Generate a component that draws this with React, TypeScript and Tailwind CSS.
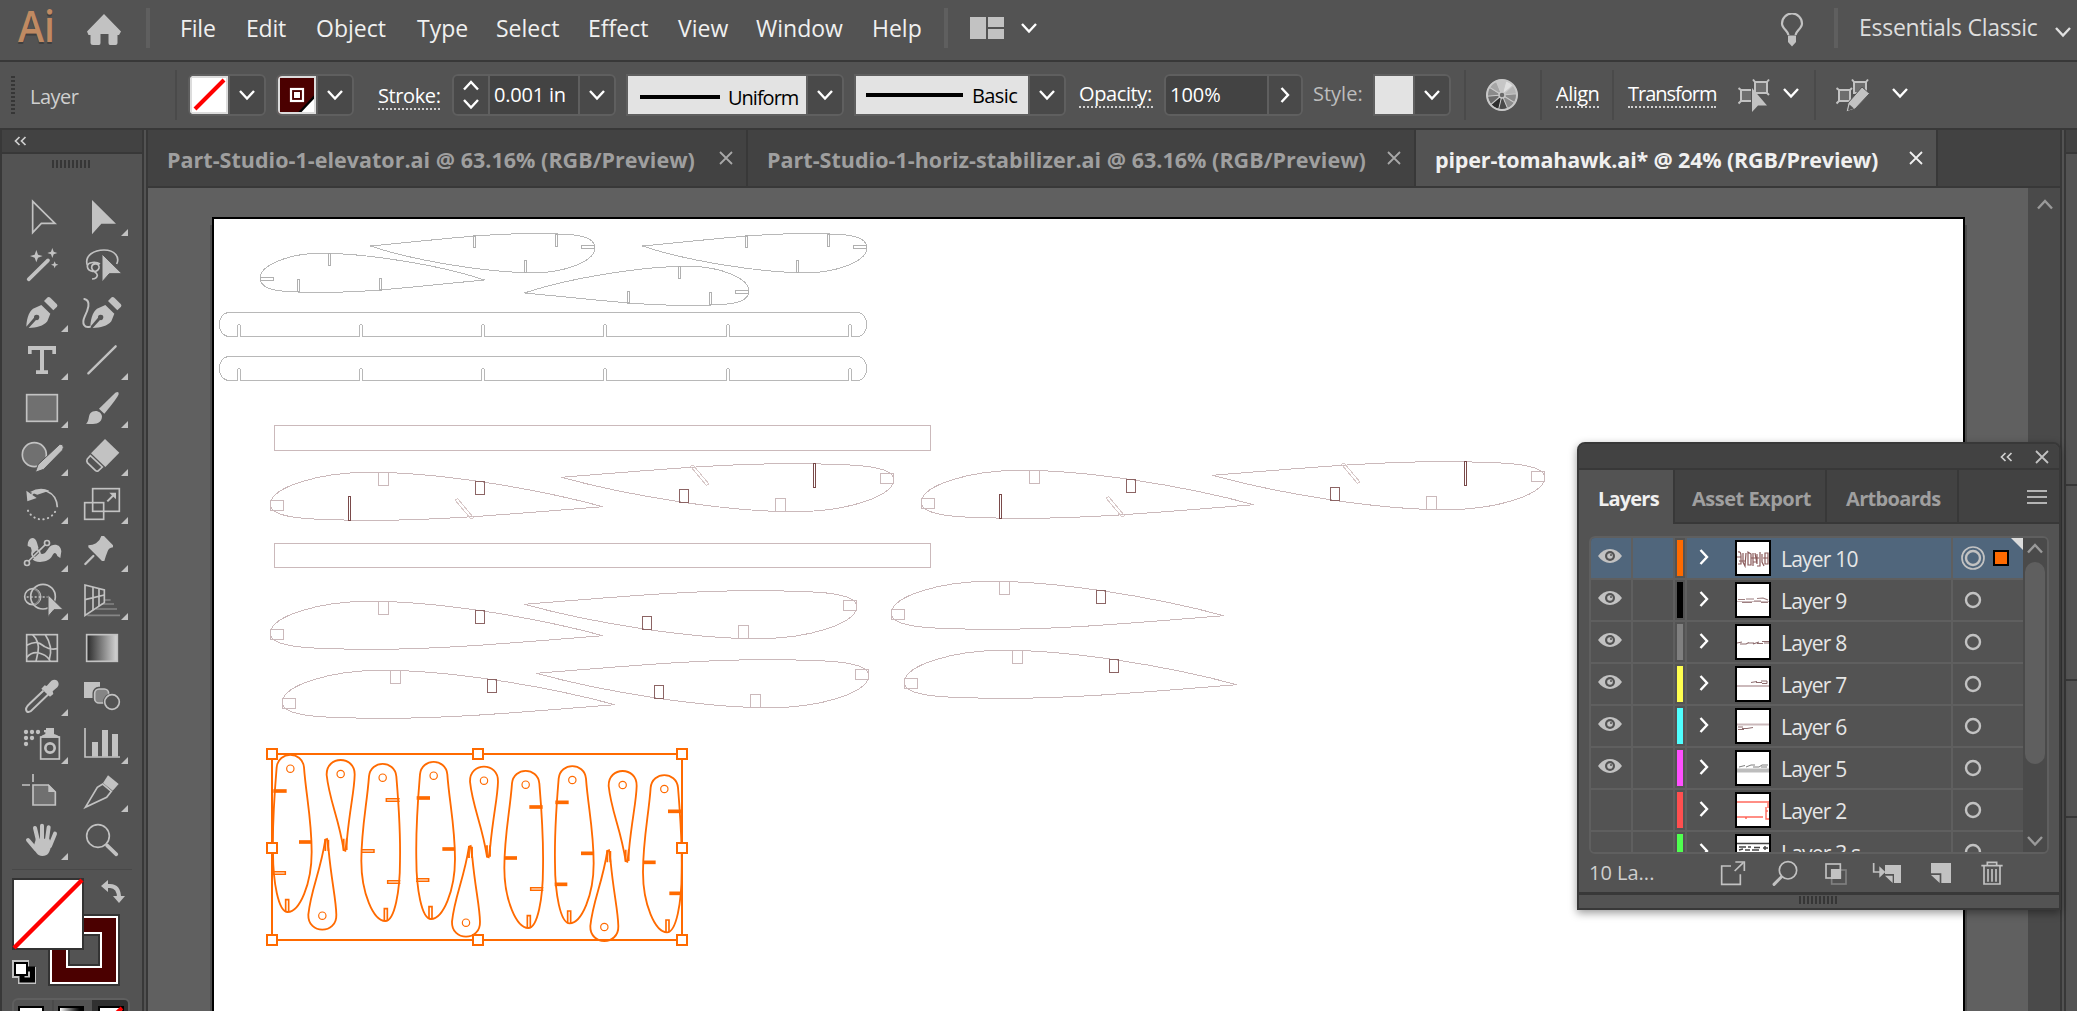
import type { ReactNode } from "react";

const ICON = "#c2c2c2";

/* ---------- small shared pieces ---------- */

type Dir = "down" | "up" | "right";

function Chevron({ dir = "down", color = "#ffffff", w = 18 }: { dir?: Dir; color?: string; w?: number }) {
  const d = dir === "down" ? "M2 5 L9 12.5 L16 5" : dir === "up" ? "M2 12.5 L9 5 L16 12.5" : "M5.5 2 L12 9 L5.5 16";
  return (
    <svg width={w} height={w} viewBox="0 0 18 18" fill="none" stroke={color} strokeWidth="2.4" className="shrink-0">
      <path d={d} />
    </svg>
  );
}

function DoubleLeft() {
  return (
    <svg width="13" height="10" viewBox="0 0 13 10" fill="none" stroke="#cfcfcf" strokeWidth="1.7" className="shrink-0">
      <path d="M5.5 1 L1.5 5 L5.5 9 M11.5 1 L7.5 5 L11.5 9" />
    </svg>
  );
}

function Close({ color }: { color: string }) {
  return (
    <svg width="14" height="14" viewBox="0 0 14 14" fill="none" stroke={color} strokeWidth="1.8" className="shrink-0">
      <path d="M1 1 L13 13 M13 1 L1 13" />
    </svg>
  );
}

function Grip() {
  return (
    <div className="flex h-2 gap-[2px]">
      {Array.from({ length: 10 }, (_, i) => (
        <span key={i} className="h-2 w-[2px] bg-[#363636]" />
      ))}
    </div>
  );
}

/* ---------- menu bar ---------- */

function MenuBar() {
  return (
    <header className="flex h-[62px] shrink-0 items-center border-b-2 border-[#383838] pb-1 text-[23px] text-[#f0f0f0]">
      <svg width="40" height="44" viewBox="0 0 40 44" className="ml-[17px] shrink-0 overflow-visible">
        <text x="1" y="37.5" fontSize="44" fontWeight="600" textLength="37" lengthAdjust="spacingAndGlyphs" fill="#3f3f3f">Ai</text>
        <text x="1" y="35.5" fontSize="44" fontWeight="600" textLength="37" lengthAdjust="spacingAndGlyphs" fill="#c08a62">Ai</text>
      </svg>
      <svg width="36" height="32" viewBox="0 0 36 32" fill={ICON} className="ml-[29px] mt-1 shrink-0">
        <path d="M18 0 L35 17.5 L33 21 H31.5 V29 Q31.5 31 29.5 31 H24 Q22.500 31 22.500 29 V20 H14.500 V29 Q14.500 31 13 31 H7 Q4.500 31 4.500 29 V21 H2.500 L1 17.500 Z" />
      </svg>
      <span className="ml-[24px] h-10 w-1 shrink-0 bg-[#5f5f5f]" />
      <nav className="ml-[30px] flex">
        <span className="w-[66px] tracking-[-0.2px]">File</span>
        <span className="w-[70px] tracking-[-0.2px]">Edit</span>
        <span className="w-[101px]">Object</span>
        <span className="w-[79px]">Type</span>
        <span className="w-[92px]">Select</span>
        <span className="w-[90px]">Effect</span>
        <span className="w-[78px]">View</span>
        <span className="w-[116px]">Window</span>
        <span className="w-[72px]">Help</span>
      </nav>
      <span className="h-10 w-1 shrink-0 bg-[#5f5f5f]" />
      <div className="ml-[22px] flex h-[22px] w-[34px] shrink-0 gap-[2px]">
        <span className="w-4 bg-[#c2c2c2]" />
        <span className="flex w-4 flex-col gap-[2px]">
          <span className="flex-1 bg-[#c2c2c2]" />
          <span className="flex-1 bg-[#c2c2c2]" />
        </span>
      </div>
      <span className="ml-4 flex shrink-0"><Chevron /></span>
      <svg width="24" height="34" viewBox="0 0 24 34" fill="none" className="ml-[742px] mt-1 shrink-0">
        <path d="M8.500 22 C8 18 2 15.500 2 10.500 A10 10 0 0 1 22 10.500 C22 15.500 16 18 15.500 22" stroke={ICON} strokeWidth="2.2" />
        <path d="M8 22.500 H16 V29 L12 33.500 L8 29 Z" fill={ICON} />
      </svg>
      <span className="ml-[30px] h-10 w-1 shrink-0 bg-[#5f5f5f]" />
      <span className="mb-[2px] ml-[21px] w-[195px] shrink-0 whitespace-nowrap tracking-[-0.25px] text-[#dedede]">Essentials Classic</span>
      <span className="mt-2 flex shrink-0"><Chevron color="#e0e0e0" /></span>
    </header>
  );
}

/* ---------- control bar ---------- */

const Sep = () => <span className="h-[50px] w-[2px] shrink-0 bg-[#4a4a4a]" />;

function DropCell({ children }: { children: ReactNode }) {
  return <span className="flex flex-1 items-center justify-center border-l-2 border-[#5f5f5f] bg-[#494949]">{children}</span>;
}

function ControlBar() {
  return (
    <div className="flex h-[68px] shrink-0 items-center border-b-2 border-[#383838] text-[20px] text-white">
      <span className="ml-[11px] flex shrink-0 flex-col gap-[2px]">
        {Array.from({ length: 10 }, (_, i) => <span key={i} className="h-[2px] w-1 bg-[#363636]" />)}
      </span>
      <span className="ml-[15px] mt-[4px] w-[145px] shrink-0 tracking-[-0.5px] text-[#cfcfcf]">Layer</span>
      <Sep />
      <span className="ml-[11px] flex h-[42px] w-[78px] shrink-0 overflow-hidden rounded-md border-2 border-[#5f5f5f]">
        <svg width="38" height="38" viewBox="0 0 38 38">
          <rect width="38" height="38" fill="#fff" />
          <path d="M5 33 L34 4" stroke="#f00" strokeWidth="4" />
          <rect x="1" y="1" width="36" height="36" fill="none" stroke="#dcdcdc" strokeWidth="2" />
        </svg>
        <DropCell><Chevron /></DropCell>
      </span>
      <span className="ml-[10px] flex h-[42px] w-[78px] shrink-0 overflow-hidden rounded-md border-2 border-[#5f5f5f]">
        <svg width="38" height="38" viewBox="0 0 38 38">
          <rect width="38" height="38" fill="#4b0000" />
          <path d="M21 37 L37 20 V37 Z" fill="#fff" />
          <path d="M21 37 L37 20" stroke="#000" strokeWidth="2.500" />
          <rect x="13" y="13" width="12" height="12" fill="#4b0000" stroke="#fff" strokeWidth="2.200" />
          <rect x="16" y="16" width="6" height="6" fill="#fff" />
          <rect x="1" y="1" width="36" height="36" fill="none" stroke="#dcdcdc" strokeWidth="2" />
        </svg>
        <DropCell><Chevron /></DropCell>
      </span>
      <span className="ml-6 mt-[4px] w-[62px] shrink-0 whitespace-nowrap border-b-2 border-dotted border-[#d0d0d0] leading-6 tracking-[-0.4px]">Stroke:</span>
      <span className="ml-3 flex h-[42px] w-[164px] shrink-0 overflow-hidden rounded-md border-2 border-[#5f5f5f]">
        <span className="flex w-[34px] flex-col items-center justify-between bg-[#494949] py-[1px]">
          <Chevron dir="up" />
          <Chevron />
        </span>
        <span className="flex w-[90px] items-center border-l-2 border-[#5f5f5f] bg-[#434343] pl-[4px] tracking-[-0.200px]">0.001 in</span>
        <DropCell><Chevron /></DropCell>
      </span>
      <span className="ml-[10px] flex h-[42px] w-[218px] shrink-0 overflow-hidden rounded-r-md border-2 border-[#5f5f5f] text-black">
        <span className="flex w-[178px] items-center bg-[#e3e3e3] pl-3 pt-[3px]">
          <span className="h-1 w-[80px] bg-black" />
          <span className="ml-[8px] mt-[2px] tracking-[-1px]">Uniform</span>
        </span>
        <DropCell><Chevron /></DropCell>
      </span>
      <span className="ml-[10px] flex h-[42px] w-[212px] shrink-0 overflow-hidden rounded-r-md border-2 border-[#5f5f5f] text-black">
        <span className="flex w-[172px] items-center bg-[#e3e3e3] pl-[10px]">
          <span className="h-1 w-[97px] bg-black" />
          <span className="ml-[9px] mt-[2px] tracking-[-0.600px]">Basic</span>
        </span>
        <DropCell><Chevron /></DropCell>
      </span>
      <span className="ml-[13px] w-[74px] shrink-0 whitespace-nowrap border-b-2 border-dotted border-[#d0d0d0] leading-6 tracking-[-0.4px]">Opacity:</span>
      <span className="ml-[11px] flex h-[42px] w-[139px] shrink-0 overflow-hidden rounded-md border-2 border-[#5f5f5f]">
        <span className="flex w-[101px] items-center bg-[#434343] pb-[1px] pl-[4px]">100%</span>
        <DropCell><Chevron dir="right" /></DropCell>
      </span>
      <span className="mb-[2px] ml-[10px] w-[60px] shrink-0 text-[#bdbdbd]">Style:</span>
      <span className="flex h-[42px] w-[78px] shrink-0 overflow-hidden rounded-r-md border-2 border-[#5f5f5f]">
        <span className="w-[38px] bg-[#e3e3e3]" />
        <DropCell><Chevron /></DropCell>
      </span>
      <span className="ml-[13px] flex"><Sep /></span>
      <svg width="34" height="34" viewBox="-17 -17 34 34" className="ml-[19px] shrink-0">
        {["#e0e0e0", "#b4b4b4", "#8c8c8c", "#8c8c8c", "#4a4a4a", "#2e2e2e", "#6a6a6a", "#8a8a8a", "#a6a6a6", "#c6c6c6"].map((c, i) => (
          <path key={c + i} d="M0 0 L3.400 -14.500 A15 15 0 0 1 11.700 -9.200 Z" fill={c} stroke="#c8c8c8" strokeWidth="1" transform={`rotate(${i * 36})`} />
        ))}
        <circle r="15" fill="none" stroke="#c8c8c8" strokeWidth="2" />
        <circle r="3" fill="#6a6a6a" stroke="#c8c8c8" strokeWidth="1.500" />
      </svg>
      <span className="ml-[21px] flex"><Sep /></span>
      <span className="ml-[14px] w-[43px] shrink-0 border-b-2 border-dotted border-[#d0d0d0] leading-6 tracking-[-0.500px]">Align</span>
      <span className="ml-[13px] flex"><Sep /></span>
      <span className="ml-[14px] w-[88px] shrink-0 border-b-2 border-dotted border-[#d0d0d0] leading-6 tracking-[-1px]">Transform</span>
      <svg width="32" height="34" viewBox="0 0 32 34" fill="none" stroke={ICON} strokeWidth="2" className="ml-[22px] shrink-0">
        <rect x="17" y="4" width="12" height="11" fill="#6e6e6e" />
        <path d="M17 4 L15 1.500 M29 4 L31 1.500 M29 15 L31 17" />
        <path d="M13 12 H3 V23 H13" fill="#6e6e6e" />
        <path d="M3 12 L0.500 10 M3 23 L0.500 25.500" />
        <path d="M14 10 V34 L20 27.500 H29 Z" fill={ICON} stroke="none" />
      </svg>
      <span className="mb-1 ml-3 flex shrink-0"><Chevron /></span>
      <span className="ml-[14px] flex"><Sep /></span>
      <svg width="34" height="34" viewBox="0 0 34 34" fill="none" stroke={ICON} strokeWidth="2" className="ml-[20px] shrink-0">
        <rect x="18" y="4" width="12" height="11" fill="#6e6e6e" />
        <path d="M18 4 L16 1.500 M30 4 L32 1.500" />
        <rect x="3" y="12" width="11" height="11" fill="#6e6e6e" />
        <path d="M3 12 L0.500 10 M3 23 L0.500 25.500 M14 12 L16 10" />
        <path d="M26 9 L33.500 15.500 L19 31 L10 34 L12 25 Z" fill={ICON} stroke="#535353" strokeWidth="1" />
        <path d="M13.500 26.500 L18 30.500 L12 32.500 Z" fill="#535353" stroke="none" />
      </svg>
      <span className="mb-1 ml-[21px] flex shrink-0"><Chevron /></span>
    </div>
  );
}

/* ---------- tool panel ---------- */

type Tool = { art: ReactNode; flyout?: boolean };

const nib = (
  <>
    <path d="M79 620 C80 592 90 568 104 564 L124 555 L151 581 L142 604 C130 618 110 624 86 624 L108 600 A8 8 0 1 0 102 593 Z" fill={ICON} stroke="none" />
    <path d="M132 543 L143 532 Q147 529 151 533 L170 552 Q174 556 171 560 L160 571 Z" fill={ICON} stroke="none" />
  </>
);

/* Each tool is drawn on a 180x144 tile; rows advance by 144 units. */
const upperTools: [Tool, Tool][] = [
  [
    { art: <path d="M98 244 V338 L124 310 H165 Z" /> },
    { art: <path d="M276 240 V343 L304 311 H348 Z" fill={ICON} stroke="none" />, flyout: true },
  ],
  [
    {
      art: (
        <>
          <path d="M86 478 L144 421" strokeWidth="11" strokeLinecap="round" />
          <g fill={ICON} stroke="none">
            <path d="M109 390 L114 404 L128 408 L114 413 L109 427 L104 413 L90 408 L104 404 Z" />
            <path d="M157 384 L161 395 L172 399 L161 403 L157 414 L153 403 L142 399 L153 395 Z" />
            <path d="M164 424 L167 431 L175 434 L167 437 L164 445 L161 437 L153 434 L161 431 Z" />
          </g>
        </>
      ),
    },
    {
      art: (
        <>
          <path d="M262 436 C252 405 285 390 312 390 C345 390 360 412 350 432" />
          <path d="M300 432 C290 425 262 424 262 440 C264 456 292 460 297 444 C300 428 276 428 275 442 C274 454 292 456 292 466 C290 476 282 477 276 477" />
          <path d="M306 402 V486 L328 461 H366 Z" fill={ICON} stroke="#535353" strokeWidth="3" />
        </>
      ),
    },
  ],
  [
    { art: nib, flyout: true },
    {
      art: (
        <>
          <g transform="translate(192 0)">{nib}</g>
          <path d="M253 537 C276 542 262 574 254 590 C244 612 254 624 270 620" strokeWidth="6" strokeLinecap="round" />
        </>
      ),
    },
  ],
  [
    { art: <path d="M84 678 H168 V702 H157 V690 H132 V751 H144 V762 H108 V751 H120 V690 H95 V702 H84 Z" fill={ICON} stroke="none" />, flyout: true },
    { art: <path d="M265 760 L347 679" strokeWidth="7" strokeLinecap="round" />, flyout: true },
  ],
  [
    { art: <rect x="80" y="824" width="92" height="80" fill="#707070" />, flyout: true },
    {
      art: (
        <g fill={ICON} stroke="none">
          <path d="M297 866 L346 818 Q357 812 356 822 Q354 832 313 881 Z" />
          <path d="M258 911 C268 905 264 890 271 880 C283 866 306 874 306 890 C305 914 275 914 258 911 Z" />
        </g>
      ),
      flyout: true,
    },
  ],
  [
    {
      art: (
        <>
          <circle cx="103" cy="1004" r="36" fill="#707070" />
          <path d="M178 974 Q188 970 190 982 L188 990 L131 1048 L106 1057 L114 1034 Z" fill={ICON} stroke="#535353" strokeWidth="3" />
        </>
      ),
      flyout: true,
    },
    {
      art: (
        <>
          <path d="M315 957 L358 998 L316 1041 L273 1000 Z" fill={ICON} stroke="none" />
          <path d="M271 1007 L307 1041 L294 1053 Q290 1055 286 1051 L262 1028 Q259 1022 262 1017 Z" />
        </>
      ),
      flyout: true,
    },
  ],
];

const lowerTools: [Tool, Tool][] = [
  [
    {
      art: (
        <>
          <path d="M94 14 C120 -12 170 2 172 52" />
          <path d="M90 6 Q120 -12 148 2 L112 14 Z" fill={ICON} stroke="none" />
          <path d="M79 2 L110 24 L82 34 Z" fill={ICON} stroke="none" />
          <path d="M84 62 A46 46 0 0 0 166 64" strokeDasharray="1 13" strokeLinecap="round" strokeWidth="6" />
        </>
      ),
      flyout: true,
    },
    {
      art: (
        <>
          <rect x="278" y="-4" width="80" height="68" />
          <rect x="254" y="38" width="57" height="50" />
          <path d="M322 34 L344 12" strokeWidth="6" />
          <path d="M328 8 H348 V28 Z" fill={ICON} stroke="none" />
        </>
      ),
      flyout: true,
    },
  ],
  [
    {
      art: (
        <>
          <path d="M83 168 C82 140 106 136 111 158 L120 190 C132 196 138 186 146 174 C156 160 182 160 184 184 L181 204 L172 198 C166 182 160 190 154 202 C142 218 104 222 94 204 Q98 184 92 172 Z" fill={ICON} stroke="none" />
          <path d="M86 212 L136 163" stroke="#535353" strokeWidth="12" />
          <path d="M86 213 L136 164" />
          <circle cx="81" cy="219" r="7.500" fill="#535353" />
          <circle cx="141" cy="159" r="7.500" fill="#535353" />
          <circle cx="108" cy="191" r="12" />
        </>
      ),
      flyout: true,
    },
    {
      art: (
        <>
          <path d="M304 138 H312 L339 166 V172 Q326 174 323 184 Q318 196 313 213 H306 L265 172 V166 Q278 166 288 160 Q300 152 304 138 Z" fill={ICON} stroke="none" />
          <path d="M280 198 L256 222" strokeWidth="7" strokeLinecap="round" />
        </>
      ),
      flyout: true,
    },
  ],
  [
    {
      art: (
        <>
          <circle cx="129" cy="320" r="37" />
          <circle cx="98" cy="320" r="24" />
          <path d="M103 298 A24 24 0 0 1 103 343" stroke="#858585" />
          <path d="M80 321 H146" strokeDasharray="6 6" />
          <path d="M144 314 V380 L162 359 H190 Z" fill={ICON} stroke="#535353" strokeWidth="3" />
        </>
      ),
      flyout: true,
    },
    {
      art: (
        <>
          <path d="M312 330 H332 M304 342 H342 M288 357 H351 M262 376 H360" stroke="#858585" />
          <path d="M255 285 L313 300 V338 L255 376 Z" />
          <path d="M279 291 V360 M297 296 V348 M255 329 L313 315" />
        </>
      ),
      flyout: true,
    },
  ],
  [
    {
      art: (
        <>
          <rect x="80" y="434" width="92" height="80" />
          <path d="M80 466 C110 450 120 460 134 470 Q150 480 172 476 M80 502 Q100 480 126 492 Q146 500 150 514 M98 434 Q120 456 114 486 L108 514 M136 434 Q160 470 148 508" />
        </>
      ),
    },
    { art: <rect x="260" y="434" width="92" height="80" fill="url(#toolGradient)" /> },
  ],
  [
    {
      art: (
        <>
          <path d="M130 602 L88 642 Q74 654 80 664 Q88 670 98 658 L146 612" strokeWidth="6" />
          <path d="M124 596 L134 586 L140 588 L154 572 Q164 566 172 572 Q180 582 172 592 L158 604 L160 612 L150 620 Z" fill={ICON} stroke="none" />
        </>
      ),
      flyout: true,
    },
    {
      art: (
        <>
          <rect x="252" y="576" width="48" height="48" fill={ICON} stroke="none" />
          <rect x="283" y="596" width="44" height="44" rx="13" fill="#858585" stroke="#535353" strokeWidth="11" />
          <rect x="284" y="597" width="42" height="42" rx="13" fill="#858585" />
          <circle cx="336" cy="636" r="27" fill="#535353" stroke="none" />
          <circle cx="336" cy="636" r="22" />
        </>
      ),
    },
  ],
  [
    {
      art: (
        <>
          <g fill={ICON} stroke="none">
            <circle cx="78" cy="726" r="6.500" /><circle cx="96" cy="726" r="6.500" /><circle cx="114" cy="726" r="6.500" />
            <circle cx="78" cy="744" r="6.500" /><circle cx="96" cy="744" r="6.500" /><circle cx="78" cy="762" r="6.500" />
            <path d="M120 743 Q124 736 136 732 V727 H132 V720 H138 V714 H162 V732 Q176 736 180 743 Z" />
          </g>
          <rect x="122" y="741" width="56" height="66" />
          <circle cx="150" cy="774" r="14" strokeWidth="8" />
        </>
      ),
      flyout: true,
    },
    {
      art: (
        <>
          <path d="M255 714 V801 H360" />
          <g fill={ICON} stroke="none">
            <rect x="276" y="756" width="18" height="44" /><rect x="306" y="720" width="18" height="80" /><rect x="336" y="732" width="18" height="68" />
          </g>
        </>
      ),
      flyout: true,
    },
  ],
  [
    {
      art: (
        <>
          <path d="M66 885 H90 M99 852 V876" />
          <path d="M99 885 H145 L166 906 V945 H99 Z" fill="#707070" />
          <path d="M145 883 V906 H168 Z" fill={ICON} stroke="none" />
        </>
      ),
    },
    {
      art: (
        <>
          <path d="M256 952 L292 892 L308 882 L334 904 L320 922 Z" />
          <path d="M324 856 L356 882 L338 902 L309 879 Z" fill={ICON} stroke="none" />
        </>
      ),
      flyout: true,
    },
  ],
  [
    {
      art: (
        <>
          <path d="M105 1014 L115 1056 M126 1007 V1050 M146 1012 L140 1056 M165 1031 L150 1068 M84 1050 L108 1078" strokeWidth="12" strokeLinecap="round" />
          <path d="M108 1046 H148 L154 1062 C150 1088 144 1098 127 1098 C112 1098 106 1086 100 1072 Z" fill={ICON} stroke="none" />
        </>
      ),
      flyout: true,
    },
    {
      art: (
        <>
          <circle cx="294" cy="1038" r="34" />
          <path d="M321 1066 L349 1093" strokeWidth="11" strokeLinecap="round" />
        </>
      ),
    },
  ],
];

function ToolTile({ tool, x, y }: { tool: Tool; x: number; y: number }) {
  return (
    <svg width="60" height="48" viewBox={`${x} ${y} 180 144`} fill="none" stroke={ICON} strokeWidth="5">
      {tool.art}
      {tool.flyout && <path d={`M${x + 168} ${y + 108} V${y + 129} H${x + 147} Z`} fill={ICON} stroke="none" />}
    </svg>
  );
}

function ToolBank({ rows, top }: { rows: [Tool, Tool][]; top: number }) {
  return (
    <div className="grid grid-cols-[60px_60px] pl-[10px]">
      {rows.flatMap(([a, b], i) => [
        <ToolTile key={`l${i}`} tool={a} x={36} y={top + 144 * i} />,
        <ToolTile key={`r${i}`} tool={b} x={216} y={top + 144 * i} />,
      ])}
    </div>
  );
}

function ToolPanel() {
  return (
    <aside className="flex w-[144px] shrink-0 flex-col border-x-2 border-[#383838] bg-[#535353]">
      <div className="flex h-6 shrink-0 items-center border-b-2 border-[#383838] bg-[#424242] pl-3"><DoubleLeft /></div>
      <div className="flex h-[39px] shrink-0 justify-center pr-[2px] pt-[6px]"><Grip /></div>
      <svg width="1" height="0" className="h-0 shrink-0">
        <defs>
          <linearGradient id="toolGradient">
            <stop offset="0" stopColor="#2a2a2a" />
            <stop offset="1" stopColor="#d6d6d6" />
          </linearGradient>
        </defs>
      </svg>
      <ToolBank rows={upperTools} top={219} />
      <ToolBank rows={lowerTools} top={-27} />
      <div className="ml-[10px] mt-1 h-[1px] w-[120px] shrink-0 bg-[#484848]" />
      <svg width="120" height="112" viewBox="0 0 120 112" className="ml-[10px] mt-2 shrink-0">
        <rect x="37" y="37" width="70" height="70" fill="#4b0000" stroke="#333" strokeWidth="2" />
        <rect x="39" y="39" width="66" height="66" fill="none" stroke="#fff" strokeWidth="2" />
        <rect x="55" y="55" width="34" height="34" fill="#535353" stroke="#fff" strokeWidth="2" />
        <rect x="57" y="57" width="30" height="30" fill="none" stroke="#333" strokeWidth="2" />
        <rect x="1" y="1" width="70" height="70" fill="#fff" stroke="#333" strokeWidth="2" />
        <path d="M2 70 L70 2" stroke="#f00" strokeWidth="4.500" />
        <path d="M95 8 H98 Q107 8 107 20" fill="none" stroke={ICON} strokeWidth="4" />
        <path d="M89 8 L96 2 V14 Z M101 18 H113 L107 25 Z" fill={ICON} />
        <path d="M0 82 H17 V89 H24 V106 H6 V100 H0 Z" fill={ICON} />
        <rect x="10" y="91" width="10.500" height="11" fill="none" stroke="#000" strokeWidth="5" />
        <rect x="3" y="85" width="12" height="12" fill="#fff" stroke="#000" strokeWidth="2" />
      </svg>
      <div className="ml-[10px] mt-2 flex h-8 w-[118px] shrink-0 overflow-hidden rounded-t-md border-2 border-[#5f5f5f]">
        <span className="flex w-[38px] pl-1 pt-[6px]"><span className="h-6 w-[26px] border-2 border-black bg-white" /></span>
        <span className="flex w-[40px] border-l-2 border-[#4b4b4b] pl-1 pt-[6px]"><span className="h-6 w-[26px] border-2 border-black bg-linear-to-r from-white to-black" /></span>
        <span className="flex flex-1 bg-[#303030] pl-[6px] pt-[6px]">
          <svg width="26" height="24" viewBox="0 0 26 24">
            <rect x="1" y="1" width="24" height="24" fill="#fff" stroke="#000" strokeWidth="2" />
            <path d="M4 20 L24 2" stroke="#f00" strokeWidth="4" />
          </svg>
        </span>
      </div>
    </aside>
  );
}

/* ---------- artboard drawing ---------- */

function SmallRib({ transform }: { transform?: string }) {
  return (
    <g transform={transform}>
      <path d="M260 278 C260 266 287 253.500 320 253.300 C365 253 440 265 484.500 280 C420 286 370 292.500 325 292.300 C285 292.500 260 292 260 278 Z" />
      <g stroke="#b0b0b0">
        <rect x="260.500" y="277.500" width="13" height="3" />
        <rect x="328.500" y="253.500" width="2" height="12" />
        <rect x="297.500" y="279.500" width="2" height="12" />
        <rect x="379.500" y="278.500" width="2" height="12" />
      </g>
    </g>
  );
}

function Spar({ y }: { y: number }) {
  const slots = [239, 361, 483, 605, 728, 850];
  return (
    <g>
      <path d={`M229.500 ${y} H857 C870 ${y} 870 ${y + 24} 857 ${y + 24} M229.500 ${y} C216 ${y} 216 ${y + 24} 229.500 ${y + 24}`} />
      <path d={`M229.500 ${y + 24} H${slots[0] - 2} ${slots.slice(0, -1).map((s, i) => `M${s + 2} ${y + 24} H${slots[i + 1] - 2}`).join(" ")} M852 ${y + 24} H857`} />
      {slots.map((s) => (
        <path key={s} d={`M${s - 1.500} ${y + 24} V${y + 13} Q${s} ${y + 11} ${s + 1.500} ${y + 13} V${y + 24}`} />
      ))}
    </g>
  );
}

function WingRib({ transform, root }: { transform?: string; root?: boolean }) {
  return (
    <g transform={transform}>
      <path d="M270 504 C272 487 318 472.300 370 472.300 C435 472.300 530 487 603 506.700 C510 514 440 520.600 370 520.300 C310 520 270 519 270 504 Z" />
      <rect x="270.500" y="500.500" width="13" height="10" />
      <rect x="378.500" y="472.500" width="10" height="13" />
      <rect x="475.500" y="481.500" width="9" height="13" stroke="#8c6464" />
      {root && (
        <>
          <rect x="348.500" y="496.500" width="2" height="24" stroke="#7a4a4a" />
          <path d="M455 500 L457.500 498.500 L473.500 517.500 L471 519 Z" stroke="#d8c8c8" />
        </>
      )}
    </g>
  );
}

/* Former outline with three edge slots (upper, middle, lower); "open" lists the slots drawn hollow. */
function Former({ cx, cy, flip, open = [] }: { cx: number; cy: number; flip?: boolean; open?: number[] }) {
  const slots = [
    { edge: -51, tip: -11, y: 67 },
    { edge: 64, tip: 26, y: 220 },
    { edge: -53, tip: -15, y: 313 },
  ];
  return (
    <g transform={`translate(${cx} ${cy}) scale(${flip ? -1 : 1} 1)`}>
      <path d="M-41 -4 C-36 -54 36 -54 41 -4 C47 80 64 150 64 250 C64 345 28 430 -8 430 C-36 430 -52 340 -52 250 C-54 150 -48 80 -41 -4 Z" />
      <circle r="11" strokeWidth="3.500" />
      {slots.map((s, i) =>
        open.includes(i) ? (
          <path key={i} d={`M${s.edge} ${s.y - 4} H${s.tip} V${s.y + 4} H${s.edge}`} strokeWidth="4.500" />
        ) : (
          <path key={i} d={`M${s.edge} ${s.y} H${s.tip}`} strokeWidth="11" />
        ),
      )}
      <path d="M-14 430 V393 H-5 V430" strokeWidth="5" />
    </g>
  );
}

function Wedge({ cx, cy, up }: { cx: number; cy: number; up?: boolean }) {
  return (
    <g transform={`translate(${cx} ${cy}) scale(1 ${up ? -1 : 1})`}>
      <path d="M-42 3 C-44 -57 44 -57 42 3 C41 50 28 100 19 195 L14 230 L9 228 C-6 130 -34 80 -42 3 Z" />
      <path d="M9 194 V230 M18 194 V228" />
      <circle r="11" strokeWidth="3.500" />
    </g>
  );
}

function Drawing() {
  const hx = [272, 478, 682];
  const hy = [754, 848, 940];
  return (
    <svg width="1749" height="792" viewBox="214 219 1749 792" fill="none" className="block shrink-0">
      <g stroke="#b8b8b8" strokeWidth="1" shapeRendering="crispEdges">
        <SmallRib />
        <SmallRib transform="translate(1009 13) scale(-1 1)" />
        <SmallRib transform="translate(855 526) scale(-1 -1)" />
        <SmallRib transform="translate(1127 526) scale(-1 -1)" />
        <Spar y={312.5} />
        <Spar y={356.5} />
      </g>
      <g stroke="#cbb9bb" strokeWidth="1" shapeRendering="crispEdges">
        <rect x="274.500" y="425.500" width="656" height="25" />
        <rect x="274.500" y="543.500" width="656" height="24" />
        <WingRib root />
        <WingRib root transform="translate(1164 984) scale(-1 -1)" />
        <WingRib root transform="translate(651 -2)" />
        <WingRib root transform="translate(1815 982) scale(-1 -1)" />
        <WingRib transform="translate(0 129)" />
        <WingRib transform="translate(1127 1111) scale(-1 -1)" />
        <WingRib transform="translate(621 109)" />
        <WingRib transform="translate(12 198)" />
        <WingRib transform="translate(1139 1180) scale(-1 -1)" />
        <WingRib transform="translate(634 178)" />
      </g>
      <g stroke="#ff6a00" strokeWidth="5.500" transform="translate(250 735) scale(0.33333)">
        <Former cx={121} cy={101} open={[2]} />
        <Wedge cx={272} cy={117} />
        <Wedge cx={217} cy={542} up />
        <Former cx={398} cy={128} flip open={[0, 1, 2]} />
        <Former cx={551} cy={122} open={[2]} />
        <Wedge cx={702} cy={137} />
        <Wedge cx={648} cy={563} up />
        <Former cx={827} cy={149} flip open={[2]} />
        <Former cx={967} cy={135} />
        <Wedge cx={1118} cy={150} />
        <Wedge cx={1063} cy={576} up />
        <Former cx={1243} cy={162} flip />
      </g>
      <g stroke="#ff6a00" strokeWidth="2" fill="#fff">
        <rect x="272" y="754" width="410" height="186" fill="none" />
        {hy.flatMap((y, r) =>
          hx.map((x, c) => (r === 1 && c === 1 ? null : <rect key={`${x}-${y}`} x={x - 5} y={y - 5} width="10" height="10" />)),
        )}
      </g>
    </svg>
  );
}

/* ---------- document area ---------- */

const docs = [
  { name: "Part-Studio-1-elevator.ai @ 63.16% (RGB/Preview)", box: "w-[600px] pl-[19px] bg-[#424242] text-[#9f9f9f]", text: "w-[552px] tracking-[0.02px]", x: "#a8a8a8" },
  { name: "Part-Studio-1-horiz-stabilizer.ai @ 63.16% (RGB/Preview)", box: "w-[668px] pl-[19px] bg-[#424242] text-[#9f9f9f]", text: "w-[620px] tracking-[0.02px]", x: "#a8a8a8" },
  { name: "piper-tomahawk.ai* @ 24% (RGB/Preview)", box: "w-[522px] pl-[19px] bg-[#535353] text-[#f0f0f0]", text: "w-[474px] tracking-[-0.17px]", x: "#f0f0f0" },
];

function DocumentArea() {
  return (
    <main className="flex min-w-0 flex-1 flex-col border-x-2 border-[#383838]">
      <div className="flex h-[58px] shrink-0 border-b-2 border-[#383838] bg-[#424242] text-[21.5px] font-bold">
        {docs.map((d) => (
          <div key={d.name} className={`flex shrink-0 items-center border-r-2 border-[#383838] ${d.box}`}>
            <span className={`mt-[5px] shrink-0 whitespace-nowrap ${d.text}`}>{d.name}</span>
            <Close color={d.x} />
          </div>
        ))}
      </div>
      <div className="flex min-h-0 flex-1 bg-[#606060]">
        <div className="flex min-w-0 flex-1 overflow-hidden pl-[62px] pt-[29px]">
          <span className="mt-2 w-[2px] shrink-0 bg-[#4d4d4d]" />
          <div className="shrink-0 border-x-2 border-t-2 border-black bg-white"><Drawing /></div>
          <span className="mt-2 w-[2px] shrink-0 bg-[#4d4d4d]" />
        </div>
        <div className="flex w-8 shrink-0 justify-center bg-[#4a4a4a] pl-[2px] pt-2"><Chevron dir="up" color="#9a9a9a" /></div>
      </div>
    </main>
  );
}

/* ---------- layers panel ---------- */

const thumbs: Record<string, ReactNode> = {
  "Layer 10": (
    <path
      d="M1 10 Q4 9 4 14 V22 H1 M6 11 V20 L8 24 L9 11 M11 10 V23 H14 V12 Z M16 11 V24 M18 11 L20 22 V12 M23 10 V24 H20 M25 12 V20 L27 24 M28 11 H31 V22 H28 Z M0 15 H4 M14 16 H22 M2 19 H8 M16 20 H20 M26 16 H31"
      stroke="#8a5a5a"
      strokeWidth="1.2"
      fill="none"
    />
  ),
  "Layer 9": (
    <g stroke="#9d7f80" strokeWidth="1.2" fill="none">
      <path d="M0 17.500 H32" stroke="#cbb9bb" />
      <path d="M1 15.500 H8 M5 18.500 H15 M9 15 H17 M17 17 H24 M20 14.500 L26 14 L31 16 M24 18.500 H31" />
    </g>
  ),
  "Layer 8": <path d="M0 17 L5 16 M3 18 H9 L12 16.500 M11 17 H17 M16 18 L22 16 M20 17.500 H26 M25 15.500 H32 M27 17 H32" stroke="#8d6c6e" strokeWidth="1.2" fill="none" />,
  "Layer 7": <><path d="M14 14.500 L20 13.500 M19 14.500 H25 M24 13 H30 V15.500 H25" stroke="#8d6c6e" strokeWidth="1" fill="none" /><path d="M0 18 H32" stroke="#cbb9bb" strokeWidth="2" /></>,
  "Layer 6": <><path d="M0 14.500 H32" stroke="#cbb9bb" strokeWidth="2" /><path d="M1 17 H6 M5 18.500 H10 L16 17.500 M1 19.500 H7" stroke="#8d6c6e" strokeWidth="1" fill="none" /></>,
  "Layer 5": <><rect y="16.500" width="32" height="4" fill="#bdbdbd" /><path d="M2 15 L8 13.500 M9 15 L14 13 H18 M16 15 H22 L25 13 H31 M24 15 H30" stroke="#808080" strokeWidth="1" fill="none" /></>,
  "Layer 2": <path d="M0 8 H32 M0 23 H26 M29 13 V25 H32 M31 9 V14 M15 8 H17 M8 24 H10 M29 17 H31" stroke="#ff6a5e" strokeWidth="1.400" fill="none" />,
  "Layer 3 s": <path d="M0 7.500 H32 M2 11 H9 M11 11 H14 M17 11.500 H23 M28 10 V14 M26 12 H31 M2 14 L6 13 M8 14 H13 M15 14 H22 M1 17 H8 M11 17 H14 M16 17 H20 M23 17 H30" stroke="#444" strokeWidth="1.400" fill="none" />,
};

const layers = [
  { name: "Layer 10", color: "bg-[#ff6a00]", visible: true, selected: true },
  { name: "Layer 9", color: "bg-black", visible: true },
  { name: "Layer 8", color: "bg-[#808080]", visible: true },
  { name: "Layer 7", color: "bg-[#ffff4f]", visible: true },
  { name: "Layer 6", color: "bg-[#4fffff]", visible: true },
  { name: "Layer 5", color: "bg-[#ff4fff]", visible: true },
  { name: "Layer 2", color: "bg-[#ff4f4f]", visible: false },
  { name: "Layer 3 s", color: "bg-[#4fff4f]", visible: false },
];

function Eye() {
  return (
    <svg width="24" height="16" viewBox="0 0 24 16">
      <path d="M0 8 Q5 1 12 1 Q19 1 24 8 Q19 15 12 15 Q5 15 0 8 Z" fill={ICON} />
      <circle cx="12" cy="8" r="5" fill="#535353" />
      <circle cx="12" cy="8" r="2.800" fill={ICON} />
      <circle cx="13" cy="7" r="1" fill="#535353" />
    </svg>
  );
}

function LayerRow({ layer }: { layer: (typeof layers)[number] }) {
  const bg = layer.selected ? "bg-[#50667c]" : "bg-[#535353]";
  return (
    <div className={`flex h-[42px] shrink-0 border-b-2 border-[#5f5f5f] ${bg}`}>
      <span className="flex w-[42px] items-center border-r-2 border-[#5f5f5f] pb-1 pl-[7px]">{layer.visible && <Eye />}</span>
      <span className="w-[42px] border-r-2 border-[#5f5f5f]" />
      <span className="flex w-3 items-center justify-center border-r-2 border-[#5f5f5f] bg-[#535353]"><span className={`h-9 w-[6px] ${layer.color}`} /></span>
      <span className="flex w-[266px] items-center border-r-2 border-[#5f5f5f] pl-2">
        <span className="mb-[2px] flex shrink-0"><Chevron dir="right" /></span>
        <span className="ml-[22px] h-9 w-9 shrink-0 border-2 border-black bg-white">
          <svg width="32" height="32" viewBox="0 0 32 32">{thumbs[layer.name]}</svg>
        </span>
        <span className="ml-[10px] mt-[3px] tracking-[-0.800px]">{layer.name}</span>
      </span>
      <span className="relative flex flex-1 items-center pl-2">
        <svg width="24" height="24" viewBox="0 0 24 24" fill="none" stroke={ICON} className="shrink-0">
          <circle cx="12" cy="12" r="7" strokeWidth="2.400" />
          {layer.selected && <circle cx="12" cy="12" r="11" strokeWidth="1.700" />}
        </svg>
        {layer.selected && (
          <>
            <span className="ml-2 h-4 w-4 border-2 border-black bg-[#ff6a00]" />
            <svg width="12" height="12" viewBox="0 0 12 12" className="absolute right-0 top-0"><path d="M0 0 H12 V12 Z" fill="#dcdcdc" /></svg>
          </>
        )}
      </span>
    </div>
  );
}

function LayersPanel() {
  return (
    <section className="absolute left-[1577px] top-[442px] flex h-[468px] w-[484px] flex-col rounded-t-lg border-2 border-[#383838] bg-[#535353] shadow-[0_3px_9px_rgba(0,0,0,0.4)]">
      <div className="flex h-[26px] shrink-0 items-center justify-end rounded-t-md border-b-2 border-[#383838] bg-[#424242] pr-[10px] pt-[2px]">
        <DoubleLeft />
        <span className="ml-[22px] flex"><Close color="#c2c2c2" /></span>
      </div>
      <div className="flex h-[54px] shrink-0 text-[20px] font-bold text-[#9f9f9f]">
        <span className="flex w-[94px] items-center pl-[19px] pt-[3px] tracking-[-0.800px] text-[#f0f0f0]">Layers</span>
        <span className="flex w-[154px] items-center whitespace-nowrap border-x-2 border-b-2 border-[#383838] bg-[#424242] pl-[17px] pt-[5px] tracking-[-0.500px]">Asset Export</span>
        <span className="flex w-[132px] items-center border-b-2 border-r-2 border-[#383838] bg-[#424242] pl-[19px] pt-[5px] tracking-[-0.650px]">Artboards</span>
        <span className="flex flex-1 items-center justify-end border-b-2 border-[#383838] bg-[#424242] pr-3 pt-[2px]">
          <span className="flex flex-col gap-1">
            <span className="h-[2px] w-5 bg-[#b4b4b4]" />
            <span className="h-[2px] w-5 bg-[#b4b4b4]" />
            <span className="h-[2px] w-5 bg-[#b4b4b4]" />
          </span>
        </span>
      </div>
      <div className="ml-[10px] mt-3 flex h-[318px] w-[460px] shrink-0 overflow-hidden rounded-md border-2 border-[#5f5f5f] text-[21px] text-[#e6e6e6]">
        <div className="flex min-w-0 flex-1 flex-col overflow-hidden">
          {layers.map((l) => <LayerRow key={l.name} layer={l} />)}
        </div>
        <div className="flex w-6 shrink-0 flex-col items-center bg-[#4a4a4a] pt-[2px]">
          <Chevron dir="up" color="#9a9a9a" />
          <span className="mt-1 h-[202px] w-5 rounded-full bg-[#5f5f5f]" />
          <span className="mt-[68px] flex"><Chevron color="#9a9a9a" /></span>
        </div>
      </div>
      <div className="flex h-[38px] shrink-0 items-center pl-[10px] text-[#cfcfcf]">
        <span className="w-[130px] shrink-0 text-[20px]">10 La...</span>
        <svg width="296" height="28" viewBox="477 534 888 84" fill="none" stroke={ICON} strokeWidth="5" className="mb-[1px] shrink-0">
          <path d="M513 555 H485 V610 H541 V580 M524 570 L550 545" />
          <path d="M526 543 H553 V570" />
          <circle cx="684" cy="568" r="26" />
          <path d="M664 588 L642 610" strokeWidth="9" strokeLinecap="round" />
          <rect x="815" y="567" width="43" height="42" stroke="#808080" />
          <rect x="798" y="549" width="43" height="42" />
          <rect x="813" y="564" width="30" height="30" fill={ICON} stroke="none" />
          <g fill={ICON} stroke="none">
            <path d="M975 552 H1023 V606 H1002 V579 H975 Z M975 584 H998 V606 Z" />
            <path d="M958 556 L976 573 L958 590 Z" />
            <path d="M1113 546 H1173 V606 H1144 V577 H1113 Z M1113 582 H1139 V606 Z" />
          </g>
          <path d="M941 546 V573 H962" />
          <path d="M1264 554 H1328 M1282 552 V544 H1310 V552 M1272 556 V609 H1320 V556 M1284 564 V602 M1296 564 V602 M1308 564 V602" />
        </svg>
      </div>
      <div className="flex min-h-0 flex-1 justify-center border-t-[3px] border-[#383838] pr-[2px] pt-[1px]"><Grip /></div>
    </section>
  );
}

/* ---------- collapsed dock at the right edge ---------- */

function Dock() {
  return (
    <div className="flex w-[13px] shrink-0 flex-col border-l-2 border-[#383838] bg-[#535353]">
      <span className="h-6 border-b-2 border-[#383838] bg-[#424242]" />
      <span className="h-[332px] border-b-2 border-[#383838]" />
      <span className="h-[195px] border-b-2 border-[#383838]" />
      <span className="h-[137px] border-b-2 border-[#383838]" />
    </div>
  );
}

export default function App() {
  return (
    <div className="relative flex h-[1011px] w-[2077px] flex-col overflow-hidden bg-[#535353] font-['Open_Sans','Noto_Sans',sans-serif]">
      <MenuBar />
      <ControlBar />
      <div className="flex min-h-0 flex-1 gap-[2px]">
        <ToolPanel />
        <DocumentArea />
        <Dock />
      </div>
      <LayersPanel />
    </div>
  );
}
